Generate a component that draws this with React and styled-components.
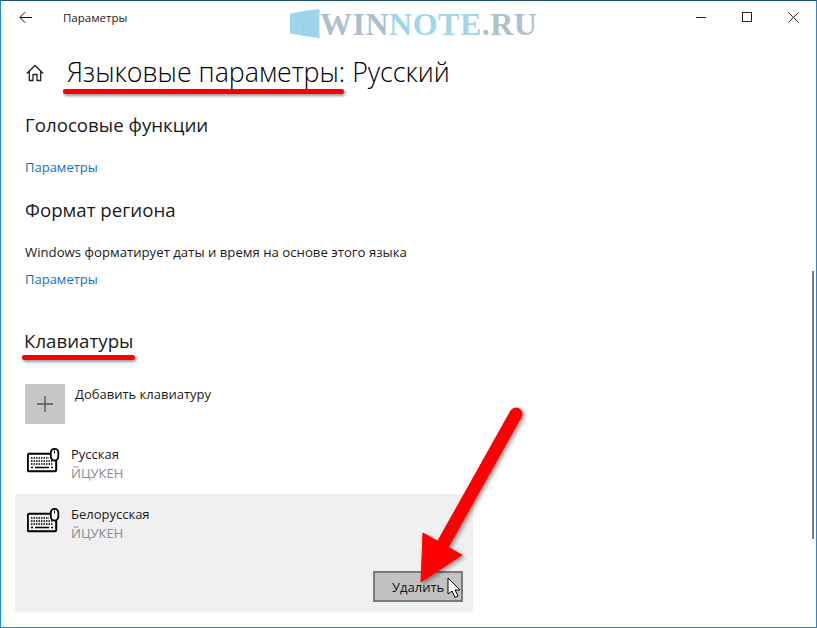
import React from 'react';
import styled, { createGlobalStyle } from 'styled-components';

const Global = createGlobalStyle`
  html, body { margin: 0; padding: 0; background: #fff; }
  body { font-family: "Open Sans", "Noto Sans", sans-serif; color: #000; }
  * { box-sizing: border-box; }
`;

const Window = styled.div`
  position: relative;
  width: 817px;
  height: 628px;
  overflow: hidden;
  background: #fff;
  border: 1px solid #1e8ae0;
  border-top-color: #1d4f78;
`;

const TitleBar = styled.header`
  display: flex;
  align-items: center;
  height: 33px;
  padding-left: 18px;
`;

const BackButton = styled.span`
  display: flex;
  width: 13px;
  height: 13px;
  color: #111;
`;

const AppName = styled.span`
  margin-left: 31px;
  font-size: 11.5px;
  color: #222;
`;

const WindowControls = styled.div`
  display: flex;
  align-items: center;
  gap: 35px;
  margin-left: auto;
  padding-right: 17px;
`;

const Content = styled.main`
  padding: 0 0 0 24px;
`;

const PageHead = styled.div`
  display: flex;
  align-items: center;
  height: 48px;
  margin-top: 15px;
  margin-left: 1px;
`;

const HomeButton = styled.span`
  display: flex;
  width: 18px;
  height: 18px;
`;

const PageTitle = styled.h1`
  margin: -2px 0 0 23px;
  font-family: "Open Sans", sans-serif;
  font-size: 26.75px;
  font-weight: 300;
  line-height: 40px;
  color: #000;
`;

const SectionTitle = styled.h2`
  margin: ${(p) => p.$top}px 0 0 ${(p) => p.$left || 0}px;
  font-family: "Open Sans", sans-serif;
  font-size: 18.7px;
  font-weight: 400;
  line-height: 26px;
  color: #1a1a1a;
`;

const Body = styled.p`
  margin: 20px 0 0;
  font-size: 13.2px;
  line-height: 18px;
  color: #1a1a1a;
`;

const Link = styled.a`
  display: block;
  margin-top: ${(p) => p.$top}px;
  font-size: 13px;
  line-height: 18px;
  color: #0a74cc;
`;

const AddRow = styled.div`
  display: flex;
  align-items: flex-start;
  margin: 30px 0 10px;
`;

const AddTile = styled.div`
  display: flex;
  align-items: center;
  justify-content: center;
  width: 40px;
  height: 40px;
  background: #c6c6c6;
  color: #555;
`;

const AddLabel = styled.span`
  margin-left: 10px;
  font-size: 13px;
  line-height: 20px;
  color: #1a1a1a;
`;

const KeyboardRow = styled.div`
  display: flex;
  align-items: flex-start;
  height: ${(p) => (p.$selected ? 118 : 60)}px;
  width: 458px;
  margin-left: -10px;
  padding: 10px 0 0 12px;
  position: relative;
  background: ${(p) => (p.$selected ? '#f0f0f0' : 'transparent')};
`;

const KeyboardIcon = styled.svg`
  flex: none;
  width: 33px;
  height: 25px;
  margin-top: 4px;
`;

const KeyboardText = styled.div`
  margin: 1px 0 0 11px;
`;

const KeyboardName = styled.div`
  font-size: 13px;
  line-height: 19px;
  color: #1a1a1a;
`;

const KeyboardLayout = styled.div`
  font-size: 13px;
  line-height: 19px;
  color: #8a8a8a;
`;

const DeleteButton = styled.button`
  position: absolute;
  right: 10px;
  bottom: 10px;
  width: 90px;
  height: 31px;
  padding: 1px 0 0 17px;
  text-align: left;
  font-family: inherit;
  font-size: 13px;
  color: #111;
  background: #c2c2c2;
  border: 2px solid #7a7a7a;
`;

const Scrollbar = styled.div`
  position: absolute;
  top: 270px;
  right: 2px;
  width: 2px;
  height: 268px;
  background: #808080;
`;

const Watermark = styled.div`
  position: absolute;
  top: 7px;
  left: 289px;
  display: flex;
  align-items: center;
  font-family: "Liberation Serif", serif;
  font-size: 32px;
  font-weight: 700;
  line-height: 29px;
  letter-spacing: 0.5px;
  color: #aebfce;
`;

const WatermarkText = styled.span`
  margin-top: 2px;
`;

const WatermarkBlue = styled.span`
  color: #a0d6ec;
`;

const Underline = styled.div`
  position: absolute;
  top: ${(p) => p.$top}px;
  left: ${(p) => p.$left}px;
  width: ${(p) => p.$width}px;
  height: 5px;
  border-radius: 2px;
  background: #ff0000;
  box-shadow: 1px 2px 3px rgba(0, 0, 0, 0.4);
`;

const Overlay = styled.svg`
  position: absolute;
  top: 0;
  left: 0;
  pointer-events: none;
`;

const Keyboard = () => (
  <KeyboardIcon viewBox="0 0 33 25" fill="none" stroke="#000">
    <path d="M23 5.800H2a1.200 1.200 0 0 0-1.200 1.200v15a1.200 1.200 0 0 0 1.200 1.200h26a1.200 1.200 0 0 0 1.200-1.200V12.500" strokeWidth="2" />
    <rect x="23.800" y="0.900" width="7.500" height="11.600" rx="3.700" fill="#fff" strokeWidth="1.800" />
    <path d="M27.500 2.500v3" strokeWidth="1" />
    <path d="M4 10h18M4 13h22M4 16h22" strokeWidth="1.500" strokeDasharray="1.500 1" />
    <path d="M4 19.500h2M8 19.500h14M24 19.500h2" strokeWidth="1.500" />
  </KeyboardIcon>
);

const App = () => (
  <Window>
    <Global />
    <TitleBar>
      <BackButton>
        <svg width="13" height="13" viewBox="0 0 13 13" fill="none" stroke="currentColor" strokeWidth="1">
          <path d="M1 6.500h12M6.200 1.200.9 6.500l5.300 5.300" />
        </svg>
      </BackButton>
      <AppName>Параметры</AppName>
      <WindowControls>
        <svg width="11" height="11" viewBox="0 0 11 11" fill="none" stroke="#222"><path d="M0 5.500h10" /></svg>
        <svg width="11" height="11" viewBox="0 0 11 11" fill="none" stroke="#222"><rect x=".5" y=".5" width="9" height="9" /></svg>
        <svg width="11" height="11" viewBox="0 0 11 11" fill="none" stroke="#222"><path d="m.5.5 10 10M10.500.5l-10 10" /></svg>
      </WindowControls>
    </TitleBar>
    <Content>
      <PageHead>
        <HomeButton>
          <svg width="18" height="18" viewBox="0 0 18 18" fill="none" stroke="#222" strokeWidth="1.300">
            <path d="M.8 9.500 9 1.500l8.200 8M3.300 7.200V16.500H7v-6h4v6h3.700V7.200" />
          </svg>
        </HomeButton>
        <PageTitle>Языковые параметры: Русский</PageTitle>
      </PageHead>
      <SectionTitle $top={15}>Голосовые функции</SectionTitle>
      <Link $top={20}>Параметры</Link>
      <SectionTitle $top={21}>Формат региона</SectionTitle>
      <Body>Windows форматирует даты и время на основе этого языка</Body>
      <Link $top={9}>Параметры</Link>
      <SectionTitle $top={40} $left={-1}>Клавиатуры</SectionTitle>
      <AddRow>
        <AddTile>
          <svg width="18" height="18" viewBox="0 0 18 18" stroke="currentColor" strokeWidth="1.300"><path d="M9 1v16M1 9h16" /></svg>
        </AddTile>
        <AddLabel>Добавить клавиатуру</AddLabel>
      </AddRow>
      <KeyboardRow>
        <Keyboard />
        <KeyboardText>
          <KeyboardName>Русская</KeyboardName>
          <KeyboardLayout>ЙЦУКЕН</KeyboardLayout>
        </KeyboardText>
      </KeyboardRow>
      <KeyboardRow $selected>
        <Keyboard />
        <KeyboardText>
          <KeyboardName>Белорусская</KeyboardName>
          <KeyboardLayout>ЙЦУКЕН</KeyboardLayout>
        </KeyboardText>
        <DeleteButton>Удалить</DeleteButton>
      </KeyboardRow>
    </Content>
    <Scrollbar />
    <Watermark>
      <svg width="30" height="29" viewBox="0 0 30 29" fill="#9dd5ec">
        <path d="M0 4.500 13 2.300V14H0zM14 2.100 29.500 0v14H14zM0 15h13v11.700L0 24.500zM14 15h15.500v14L14 26.900z" />
        <path d="M0 14.500h29.500M13.500 2.200V27" stroke="#b3c6d2" strokeWidth="1" />
      </svg>
      <WatermarkText>WIN<WatermarkBlue>NOTE</WatermarkBlue>.RU</WatermarkText>
    </Watermark>
    <Underline $top={88} $left={62} $width={281} />
    <Underline $top={354} $left={21} $width={113} />
    <Overlay width="817" height="628" viewBox="0 0 817 628">
      <defs>
        <filter id="arrowShadow" x="-20%" y="-20%" width="140%" height="140%">
          <feDropShadow dx="2" dy="2" stdDeviation="2" floodColor="#000" floodOpacity="0.4" />
        </filter>
      </defs>
      <g filter="url(#arrowShadow)">
        <path d="M515 413 441 545" stroke="#f00" strokeWidth="13" strokeLinecap="round" fill="none" />
        <path d="M422 532 461 554 420 581z" fill="#f00" stroke="#f00" strokeWidth="1" />
      </g>
      <path d="M447 577v16l4-3 3 6.500 3-1.500-3-6h5z" fill="#fff" stroke="#000" strokeWidth="1" />
    </Overlay>
  </Window>
);

export default App;
